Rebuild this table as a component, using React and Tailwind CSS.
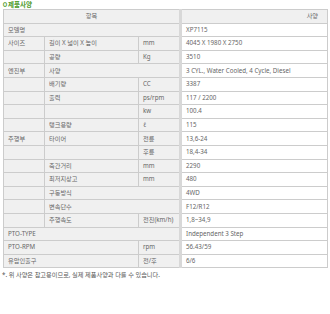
import React from "react";

const G = "bg-[#f0f0f0]";
const cell = "border border-[#cccccc] h-[13.6px] p-0 pl-[4px] align-middle text-left font-normal";
const val = "border border-[#cccccc] border-l-[3px] border-l-[#d8d8d8] bg-white h-[13.6px] p-0 pl-[4px] align-middle text-left";

const rows = [
  { c: [["모델명", 3]], v: "XP7115" },
  { c: [["사이즈", 1], ["길이 X 넓이 X 높이", 1], ["mm", 1]], v: "4045 X 1980 X 2750" },
  { c: [["", 1], ["공량", 1], ["Kg", 1]], v: "3510" },
  { c: [["엔진부", 1], ["사양", 2]], v: "3 CYL., Water Cooled, 4 Cycle, Diesel" },
  { c: [["", 1], ["배기량", 1], ["CC", 1]], v: "3387" },
  { c: [["", 1], ["출력", 1], ["ps/rpm", 1]], v: "117 / 2200" },
  { c: [["", 1], ["", 1], ["kw", 1]], v: "100.4" },
  { c: [["", 1], ["탱크용량", 1], ["ℓ", 1]], v: "115" },
  { c: [["주행부", 1], ["타이어", 1], ["전륜", 1]], v: "13,6-24" },
  { c: [["", 1], ["", 1], ["후륜", 1]], v: "18,4-34" },
  { c: [["", 1], ["축간거리", 1], ["mm", 1]], v: "2290" },
  { c: [["", 1], ["최저지상고", 1], ["mm", 1]], v: "480" },
  { c: [["", 1], ["구동방식", 2]], v: "4WD" },
  { c: [["", 1], ["변속단수", 2]], v: "F12/R12" },
  { c: [["", 1], ["주행속도", 1], ["전진(km/h)", 1]], v: "1,8~34,9" },
  { c: [["PTO-TYPE", 3]], v: "Independent 3 Step" },
  { c: [["PTO-RPM", 2], ["rpm", 1]], v: "56.43/59" },
  { c: [["유압인출구", 2], ["전/후", 1]], v: "6/6" },
];

export default function App() {
  return (
    <div
      className="w-[330px] h-[314px] bg-white text-[#666666] text-[6.2px] leading-none overflow-hidden"
      style={{ fontFamily: '"Noto Sans", "Noto Sans CJK KR", sans-serif' }}
    >
      <div className="pl-[2px] pt-[1px] h-[9px] text-[6.5px] font-bold text-[#4c9a2a] leading-[7px]">
        ㅇ제품사양
      </div>
      <table className="ml-[3px] w-[324px] table-fixed border-collapse">
        <colgroup>
          <col className="w-[41px]" />
          <col className="w-[94px]" />
          <col className="w-[42px]" />
          <col className="w-[147px]" />
        </colgroup>
        <thead>
          <tr>
            <th colSpan={3} className={`border border-[#cccccc] ${G} h-[13.6px] p-0 text-center font-normal`}>
              항목
            </th>
            <th className={`border border-[#cccccc] border-l-[3px] border-l-[#d8d8d8] ${G} h-[13.6px] p-0 pr-[9px] text-right font-normal`}>
              사양
            </th>
          </tr>
        </thead>
        <tbody>
          {rows.map((r, i) => (
            <tr key={i}>
              {r.c.map(([t, s], j) => (
                <td key={j} colSpan={s} className={`${cell} ${G}`}>
                  {t}
                </td>
              ))}
              <td className={val}>{r.v}</td>
            </tr>
          ))}
        </tbody>
      </table>
      <div className="pl-[2px] pt-[4px] text-[#555555]">
        *. 위 사양은 참고용이므로, 실제 제품사양과 다를 수 있습니다.
      </div>
    </div>
  );
}
